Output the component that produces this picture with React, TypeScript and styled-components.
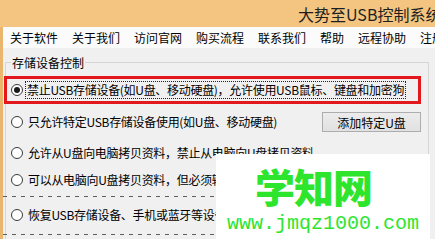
import React from 'react';
import styled, { createGlobalStyle } from 'styled-components';

const GlobalStyle = createGlobalStyle`
  html, body {
    margin: 0;
    padding: 0;
  }
  body {
    width: 435px;
    height: 239px;
    overflow: hidden;
    background: #f0f0f0;
    font-family: "Noto Sans CJK SC", "Microsoft YaHei", sans-serif;
  }
`;

const Frame = styled.div`
  position: relative;
  width: 435px;
  height: 239px;
  display: flex;
  flex-direction: column;
  background: #eab56c;
  overflow: hidden;
`;

const TitleBar = styled.div`
  height: 27px;
  flex: none;
  display: flex;
  align-items: center;
  padding-left: 298px;
  background: #f4c580;
  color: #1e1e1e;
  font-size: 16px;
  white-space: nowrap;
  overflow: hidden;
`;

const Client = styled.div`
  flex: 1;
  margin-left: 3px;
  display: flex;
  flex-direction: column;
  background: #f0f0f0;
`;

const MenuBar = styled.nav`
  height: 21px;
  flex: none;
  display: flex;
  align-items: center;
  background: #fbfbfb;
  white-space: nowrap;
  overflow: hidden;
`;

const MenuItem = styled.span`
  flex: none;
  padding: 0 7px;
  font-size: 12px;
  line-height: 21px;
  color: #000;
`;

const Group = styled.fieldset`
  flex: 1;
  width: 424px;
  box-sizing: border-box;
  min-width: 0;
  margin: 6px 0 0 2px;
  padding: 0 7px 0 0;
  border: 1px solid #d6d6d6;
  border-bottom: none;
`;

const Legend = styled.legend`
  margin-left: 5px;
  padding: 0 1px;
  font-size: 12px;
  line-height: 17px;
  color: #000;
`;

const Selected = styled.div`
  height: 28px;
  box-sizing: border-box;
  margin: 5px 0 0 -2px;
  padding-left: 4px;
  display: flex;
  align-items: center;
  gap: 3px;
  border: 3px solid #e2181d;
`;

const Row = styled.div<{ $height: number }>`
  height: ${p => p.$height}px;
  padding-left: 5px;
  display: flex;
  align-items: center;
  gap: 4px;
`;

const Radio = styled.span<{ $checked?: boolean }>`
  flex: none;
  width: 12px;
  height: 12px;
  box-sizing: border-box;
  border-radius: 50%;
  border: 1px solid #3a3a3a;
  background: #fff;
  display: flex;
  align-items: center;
  justify-content: center;

  &::after {
    content: '';
    width: 6px;
    height: 6px;
    border-radius: 50%;
    background: ${p => (p.$checked ? '#1a1a1a' : 'transparent')};
  }
`;

const Label = styled.span<{ $focused?: boolean }>`
  font-size: 12px;
  line-height: 16px;
  letter-spacing: -0.3px;
  color: #000;
  white-space: nowrap;
  padding: 0 1px;
  outline: ${p => (p.$focused ? '1px dotted #222' : 'none')};
`;

const Spacer = styled.div`
  flex: 1;
`;

const Button = styled.button`
  width: 99px;
  height: 20px;
  padding: 0;
  border: 1px solid #adadad;
  background: linear-gradient(#ececec, #e1e1e1);
  font-family: inherit;
  font-size: 12px;
  color: #000;
`;

const Dashes = styled.div`
  height: 1px;
  margin: 2px 0 0 -3px;
  background: repeating-linear-gradient(to right, #5e5e5e 0 4px, transparent 4px 9px);
`;

const Watermark = styled.div`
  position: absolute;
  left: 216px;
  top: 154px;
  width: 214px;
  height: 85px;
  box-sizing: border-box;
  padding-top: 12px;
  background: #fff;
  display: flex;
  flex-direction: column;
  color: #2ee52e;
`;

const MarkTitle = styled.div`
  margin-left: 39px;
  font-size: 40px;
  font-weight: 900;
  line-height: 40px;
  letter-spacing: -1px;
`;

const MarkUrl = styled.div`
  margin: 8px 0 0 11px;
  font-family: "Liberation Mono", monospace;
  font-size: 20px;
  line-height: 20px;
`;

const menu = ['关于软件', '关于我们', '访问官网', '购买流程', '联系我们', '帮助', '远程协助', '注册'];

export default function App() {
  return (
    <>
      <GlobalStyle />
      <Frame>
        <TitleBar>大势至USB控制系统V14.0</TitleBar>
        <Client>
          <MenuBar>
            {menu.map(m => (
              <MenuItem key={m}>{m}</MenuItem>
            ))}
          </MenuBar>
          <Group>
            <Legend>存储设备控制</Legend>
            <Selected>
              <Radio $checked />
              <Label $focused>禁止USB存储设备(如U盘、移动硬盘)，允许使用USB鼠标、键盘和加密狗</Label>
            </Selected>
            <Row $height={36}>
              <Radio />
              <Label>只允许特定USB存储设备使用(如U盘、移动硬盘)</Label>
              <Spacer />
              <Button>添加特定U盘</Button>
            </Row>
            <Row $height={26}>
              <Radio />
              <Label>允许从U盘向电脑拷贝资料，禁止从电脑向U盘拷贝资料</Label>
            </Row>
            <Row $height={28}>
              <Radio />
              <Label>可以从电脑向U盘拷贝资料，但必须输入管理员密码</Label>
            </Row>
            <Dashes />
            <Row $height={35}>
              <Radio />
              <Label>恢复USB存储设备、手机或蓝牙等设备的使用</Label>
            </Row>
            <Dashes />
          </Group>
        </Client>
        <Watermark>
          <MarkTitle>学知网</MarkTitle>
          <MarkUrl>www.jmqz1000.com</MarkUrl>
        </Watermark>
      </Frame>
    </>
  );
}
